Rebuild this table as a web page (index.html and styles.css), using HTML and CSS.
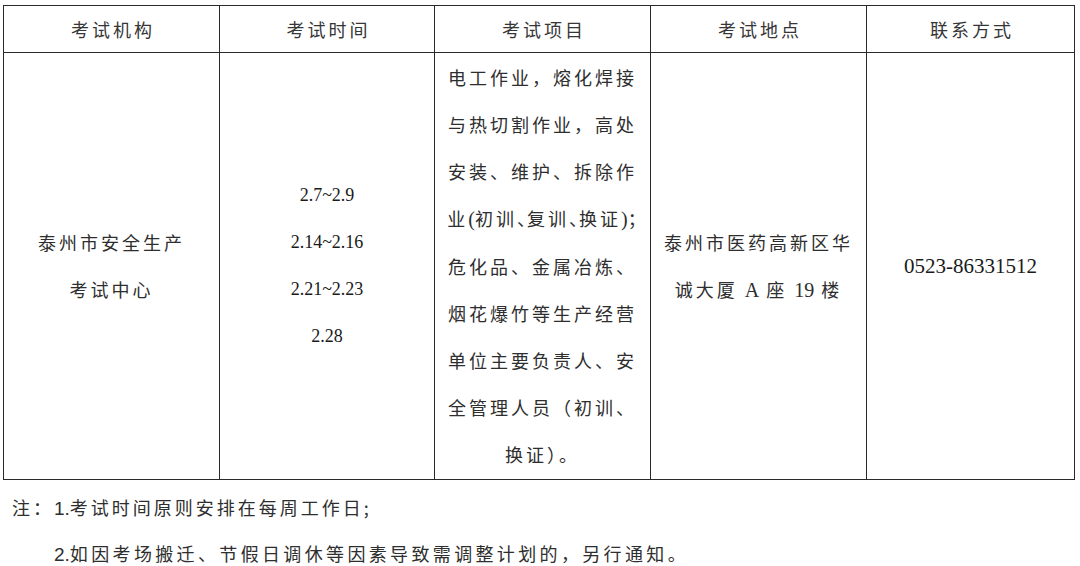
FILE: index.html
```html
<!DOCTYPE html>
<html lang="zh-CN">
<head>
<meta charset="utf-8">
<title>考试计划</title>
<link rel="stylesheet" href="styles.css">
</head>
<body>
<div class="page">
  <table class="plan">
    <colgroup>
      <col class="c1"><col class="c2"><col class="c3"><col class="c4"><col class="c5">
    </colgroup>
    <thead>
      <tr>
        <th>考试机构</th>
        <th>考试时间</th>
        <th>考试项目</th>
        <th>考试地点</th>
        <th>联系方式</th>
      </tr>
    </thead>
    <tbody>
      <tr>
        <td class="cjk">
          <div>泰州市安全生产</div>
          <div>考试中心</div>
        </td>
        <td class="dates">
          <div>2.7~2.9</div>
          <div>2.14~2.16</div>
          <div>2.21~2.23</div>
          <div>2.28</div>
        </td>
        <td class="cjk items">
          <div>电工作业，熔化焊接</div>
          <div>与热切割作业，高处</div>
          <div>安装、维护、拆除作</div>
          <div class="tight">业<span class="lat">(</span>初训<span class="half">、</span>复训<span class="half">、</span>换证<span class="lat">)</span><span class="half">；</span></div>
          <div>危化品、金属冶炼、</div>
          <div>烟花爆竹等生产经营</div>
          <div>单位主要负责人、安</div>
          <div>全管理人员（初训、</div>
          <div>换证）。</div>
        </td>
        <td class="cjk">
          <div>泰州市医药高新区华</div>
          <div>诚大厦 <span class="lat">A</span> 座 <span class="lat">19</span> 楼</div>
        </td>
        <td class="phone">0523-86331512</td>
      </tr>
    </tbody>
  </table>
  <div class="notes">
    <p class="note first"><span class="lbl">注：</span><span class="num">1.</span>考试时间原则安排在每周工作日;</p>
    <p class="note second"><span class="num">2.</span>如因考场搬迁、节假日调休等因素导致需调整计划的，另行通知。</p>
  </div>
</div>
</body>
</html>
```
FILE: styles.css
```css
html, body {
  margin: 0;
  padding: 0;
  background: #ffffff;
}

.page {
  width: 1080px;
  height: 566px;
  overflow: hidden;
  padding: 5px 0 0 3px;
  box-sizing: border-box;
  font-family: "Noto Sans CJK SC", "Noto Sans", sans-serif;
  color: #2e2e2e;
}

.plan {
  border-collapse: collapse;
  table-layout: fixed;
  width: 1071px;
}

.c1 { width: 216px; }
.c2 { width: 215px; }
.c3 { width: 216px; }
.c4 { width: 216px; }
.c5 { width: 208px; }

.plan th,
.plan td {
  border: 1px solid #2a2a2a;
  text-align: center;
  vertical-align: middle;
  padding: 0;
}

.plan th {
  height: 46px;
  font-weight: 400;
  font-size: 18px;
  letter-spacing: 3px;
  color: #363636;
  padding-left: 3px;
}

.plan tbody td {
  height: 426px;
}

.cjk {
  font-size: 18px;
  letter-spacing: 3px;
  line-height: 47px;
  padding-left: 3px;
}

.items div {
  white-space: nowrap;
}

.tight .half {
  font-feature-settings: "halt";
  letter-spacing: 1px;
}

.lat {
  font-family: "Liberation Serif", "Times New Roman", serif;
  font-size: 20px;
  letter-spacing: 0;
}

.dates {
  font-family: "Liberation Serif", "Times New Roman", serif;
  font-size: 18px;
  line-height: 47px;
  color: #1a1a1a;
}

.phone {
  font-family: "Liberation Serif", "Times New Roman", serif;
  font-size: 21px;
  color: #1a1a1a;
}

.notes {
  padding-left: 9px;
}

.note {
  margin: 0;
  font-size: 18px;
  letter-spacing: 3px;
  line-height: 44px;
  color: #2e2e2e;
}

.note.first {
  margin-top: 5px;
}

.note.second {
  padding-left: 42px;
  letter-spacing: 3.35px;
}

.num {
  font-family: "Liberation Sans", Arial, sans-serif;
  font-size: 19px;
  letter-spacing: 0;
}
```
